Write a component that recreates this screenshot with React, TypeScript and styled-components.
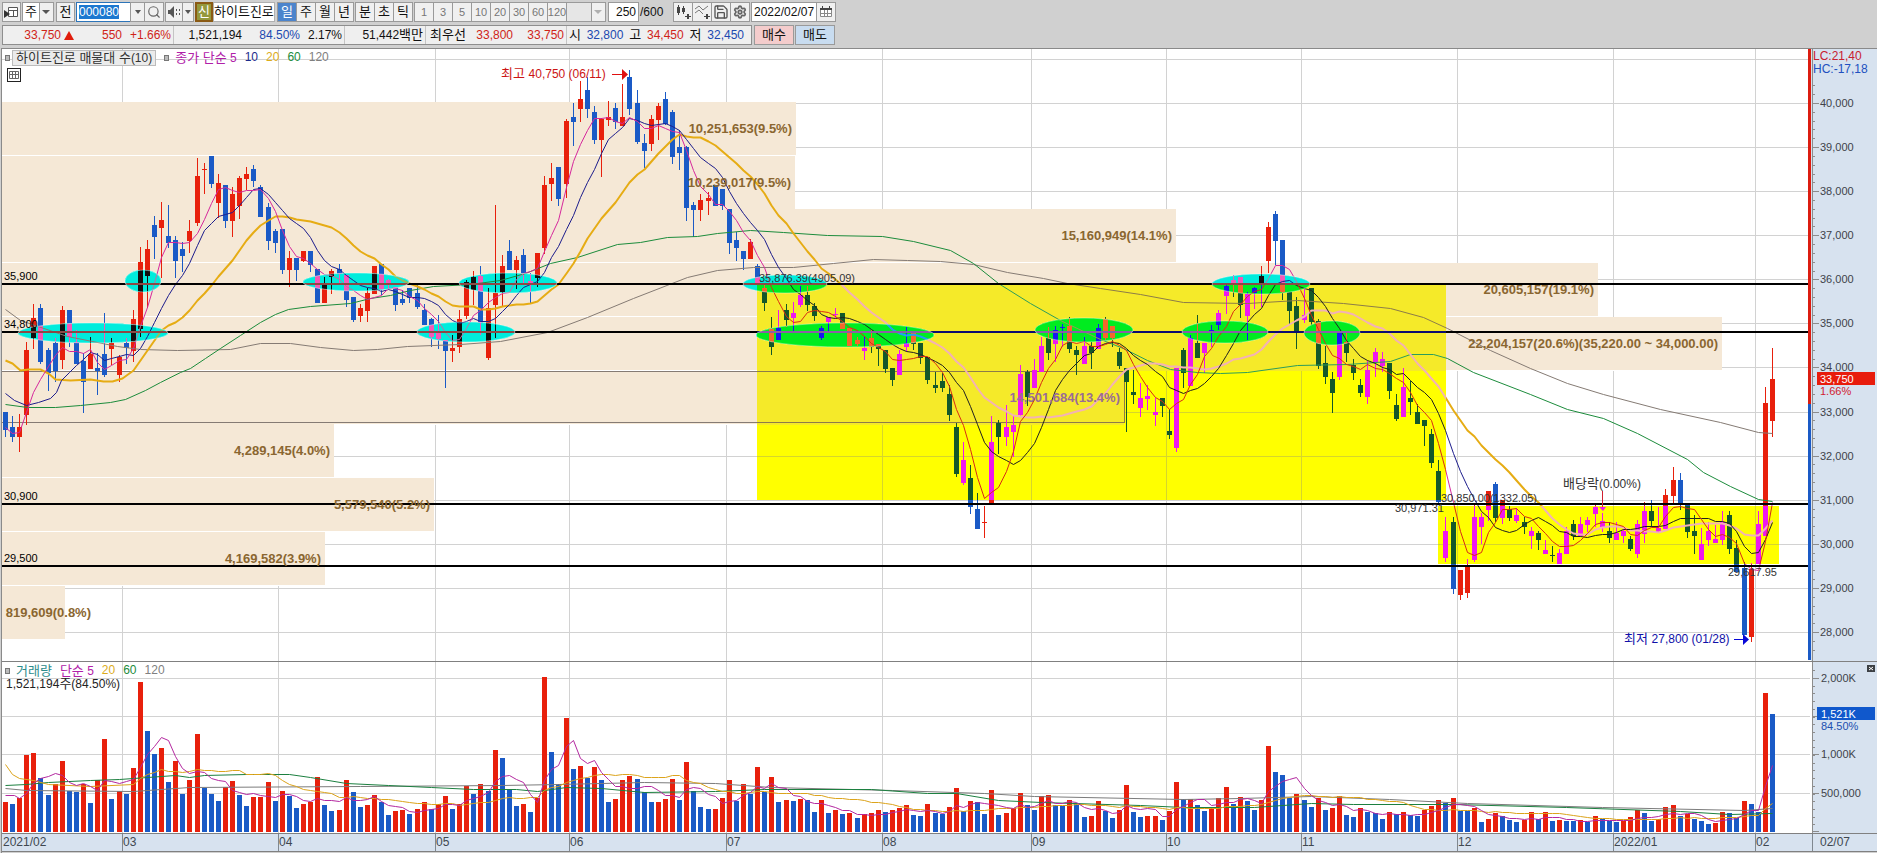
import React from "react";
import styled, { createGlobalStyle } from "styled-components";
import { Search, Settings, Save } from "lucide-react";

const FONT = '"Liberation Sans", "Noto Sans CJK KR", sans-serif';

const GlobalStyle = createGlobalStyle`
  * { box-sizing: border-box; }
  body { margin: 0; background: #d0d0d0; font-family: ${FONT}; font-size: 12px; color: #111; }
  button, input, select { font: inherit; color: inherit; border-radius: 0; margin: 0; }
`;

/* ---------- data ---------- */

type Candle = { x: number; hi: number; top: number; bot: number; lo: number; up: boolean };

const CANDLE_ROWS = `
412,412,430,437,b 416,427,437,442,b 414,427,437,452,r 342,350,415,425,r 304,318,338,349,r 304,308,362,364,b 348,350,373,391,b 338,343,371,382,b 306,310,360,369,r 310,310,337,347,b
330,342,364,364,b 353,361,382,413,b 337,354,369,369,r 353,368,371,395,b 313,354,375,377,b 338,343,349,365,r 355,357,375,382,r 338,343,348,364,b 310,319,351,362,r 247,262,329,337,r
240,249,276,308,r 216,225,237,259,b 202,220,228,278,r 205,236,243,248,b 236,240,261,278,b 242,249,256,272,b 220,231,241,253,r 158,176,223,226,r 163,169,170,194,r 156,156,184,188,b
174,183,203,218,r 185,185,221,228,b 187,194,221,237,r 176,178,206,219,r 167,174,179,190,r 165,169,181,187,b 185,187,217,217,b 203,207,241,250,b 229,231,243,253,b 229,229,270,274,b
251,258,270,287,r 258,258,270,281,b 251,251,261,262,r 251,251,265,272,b 269,269,303,303,b 277,283,303,303,r 269,271,277,294,r 264,269,274,283,b 275,275,300,307,b 297,297,320,322,b
304,308,316,322,r 288,293,311,322,r 266,266,294,294,r 264,264,289,295,b 279,280,285,290,b 287,287,305,311,b 290,299,303,305,b 288,288,298,303,b 283,293,307,309,b 304,310,325,325,b
318,319,337,347,b 315,331,339,349,b 340,340,351,388,b 335,348,351,362,r 310,319,347,353,r 280,282,316,319,r 271,277,290,305,r 266,276,323,335,b 288,308,358,360,r 205,293,305,338,r
255,266,292,307,r 240,251,270,270,b 256,260,270,289,r 249,255,274,283,b 273,281,283,303,b 253,253,278,287,r 176,185,248,254,r 163,178,184,201,r 167,167,199,206,b 119,121,184,198,r
103,117,122,146,b 81,99,109,122,r 77,90,109,118,b 106,112,140,144,b 118,119,140,177,r 101,117,120,126,r 103,108,122,129,b 84,117,126,126,r 70,77,109,115,b 90,103,142,144,b
134,143,151,168,b 115,119,144,151,r 103,106,120,140,r 92,99,124,125,b 110,112,157,164,b 130,147,153,170,b 146,147,208,221,b 202,205,210,237,b 194,200,210,221,r 192,198,201,215,r
185,185,206,206,b 189,189,206,210,b 209,209,243,254,b 232,240,248,261,b 251,251,259,270,b 239,242,259,259,r 264,266,283,283,b 283,288,303,311,b 317,329,347,355,b 310,328,340,340,r
304,310,320,327,b 302,313,318,332,r 286,295,305,307,r 286,295,305,311,b 303,306,316,321,b 326,328,338,340,r 317,317,322,332,r 308,314,315,318,r 313,313,329,329,b 328,328,346,346,b
337,340,344,346,b 336,348,351,360,r 330,338,347,353,b 344,344,349,366,b 350,350,369,373,b 368,368,380,386,b 350,354,375,375,r 327,343,347,352,r 331,331,344,350,b 343,343,358,364,b
357,357,380,384,b 372,385,388,393,b 373,381,388,392,b 385,394,415,421,b 423,427,474,477,b 442,460,483,485,r 465,478,507,514,b 493,509,529,529,b 506,522,523,538,r 416,442,504,504,r
420,423,437,454,b 405,427,437,446,r 416,425,432,457,r 365,374,415,417,r 370,372,397,406,b 359,370,388,388,r 337,346,372,372,r 327,338,353,360,b 326,330,344,362,r 324,327,328,347,r
317,326,349,353,b 346,350,355,375,b 337,346,364,364,r 342,346,353,369,b 324,328,349,349,r 317,319,338,340,b 326,326,338,347,b 348,352,366,369,b 368,368,382,432,b 370,392,395,404,b
383,398,408,417,r 385,396,399,410,r 398,412,415,426,r 398,398,406,417,b 409,431,435,439,b 368,368,448,452,r 348,350,373,388,b 335,338,386,386,r 315,343,358,358,b 343,343,353,373,r
325,330,331,347,r 310,313,325,330,r 283,286,296,314,r 275,280,284,297,b 277,277,305,318,b 292,294,316,340,r 287,288,293,309,r 266,276,283,307,r 222,227,261,273,r 211,214,241,265,b
240,240,292,300,b 292,292,311,325,b 297,306,333,349,b 288,315,320,323,r 288,288,322,325,b 319,321,366,369,b 346,363,377,384,b 372,379,393,413,b 333,333,377,380,r 332,342,353,362,b
359,365,373,380,b 379,385,393,397,b 361,370,397,404,r 348,352,362,377,r 352,359,366,372,r 363,363,391,399,b 394,405,419,421,b 368,387,417,417,r 381,398,402,415,b 404,412,424,424,b
420,420,426,446,b 429,434,463,468,b 460,471,502,505,b 517,531,558,562,r 517,522,589,594,b 570,570,595,600,r 559,567,593,598,r 505,517,560,562,r 513,517,527,544,r 491,491,510,521,r
482,484,518,522,b 500,500,518,524,r 506,509,518,521,b 508,515,521,523,r 517,522,527,534,b 527,531,536,549,r 531,533,540,550,b 540,550,554,554,r 546,555,556,562,b 549,553,564,564,r
527,531,554,554,r 520,524,536,540,b 517,524,536,537,r 517,520,525,532,r 505,507,514,527,r 513,521,527,532,r 522,531,538,543,b 522,533,540,540,r 529,531,536,543,r 536,539,549,551,b
520,524,554,558,r 502,511,534,543,r 500,511,521,527,b 507,528,532,532,r 489,495,529,529,r 467,480,496,503,r 473,480,504,510,b 505,505,532,538,b 515,531,536,554,b 528,544,560,560,r
522,531,540,546,r 525,539,543,543,r 511,522,540,545,r 511,515,549,554,b 540,548,572,572,b 562,568,635,635,b 563,569,637,642,r 511,524,564,564,r 387,403,536,536,r 348,379,421,437,r
`;

const xAt = (i: number) => 5 + Math.round(7.096 * i);

const candles: Candle[] = CANDLE_ROWS.trim()
  .split(/\s+/)
  .map((row, i) => {
    const [hi, top, bot, lo, dir] = row.split(",");
    return { x: xAt(i), hi: +hi, top: +top, bot: +bot, lo: +lo, up: dir === "r" };
  });

const volumes = `
89 83 102 230 236 161 110 143 212 124 119 143 86 155 278 98 122 113 191 449
302 233 251 149 212 113 155 293 132 113 92 135 152 110 77 104 105 149 92 122
107 71 83 89 164 80 62 65 155 119 74 80 110 89 50 62 65 53 68 89
68 85 107 68 83 137 113 143 122 245 221 125 77 83 59 101 464 239 143 341
188 197 161 194 155 89 98 155 167 158 119 89 90 98 158 95 209 122 74 68
69 101 155 92 143 113 194 119 164 89 95 92 98 97 59 95 56 65 53 56
41 53 56 65 59 65 71 80 50 47 83 56 53 74 132 62 92 89 53 125
50 56 71 116 80 65 107 110 80 77 95 83 44 47 92 62 41 65 140 59
44 47 48 35 62 149 98 99 80 62 71 101 134 83 104 92 65 95 257 179
170 101 113 95 74 101 65 71 107 50 44 71 59 56 38 59 53 59 50 47
65 77 95 86 101 63 62 71 29 38 56 47 35 29 35 59 38 59 32 35
34 32 35 30 47 38 32 31 32 44 65 56 32 38 74 80 47 53 38 32
23 26 59 56 41 92 83 59 416 353`
  .trim()
  .split(/\s+/)
  .map(Number);

type Point = [number, number];

/* Simple moving average; `lead` supplies the stretch before the first full window. */
const average = (values: number[], span: number, lead: Point[]): Point[] => {
  const out: Point[] = lead.slice();
  for (let i = span - 1; i < values.length; i++) {
    let sum = 0;
    for (let k = 0; k < span; k++) sum += values[i - k];
    out.push([xAt(i), Math.round(sum / span)]);
  }
  return out;
};

const closes = candles.map((c) => (c.up ? c.top : c.bot));
const ma5 = average(closes, 5, [[5, 427], [12, 433], [19, 432], [26, 412]]);
const ma10 = average(closes, 10, [[5, 393], [14, 400], [26, 405], [38, 402], [50, 398], [56, 392], [61, 380]]);
const ma20 = average(closes, 20, [[5, 360], [12, 363], [20, 370], [28, 369], [40, 369], [48, 373], [55, 379], [70, 380], [90, 379], [103, 381], [112, 381], [122, 378], [133, 370]]);
const ma60: Point[] = [
  [5, 404], [27, 407], [55, 407], [80, 405], [110, 402], [125, 399], [145, 390], [160, 382], [180, 372], [190, 368], [205, 358], [220, 348],
  [240, 335], [260, 322], [275, 314], [288, 309], [310, 306], [350, 303], [370, 298], [390, 295], [410, 290], [433, 286], [470, 284], [500, 280],
  [525, 273], [550, 263], [577, 257], [617, 244], [640, 242], [667, 237], [697, 236], [717, 233], [750, 230], [783, 232], [827, 235], [882, 236],
  [913, 241], [950, 250], [973, 263], [998, 283], [1030, 303], [1060, 320], [1100, 339], [1123, 348], [1147, 360], [1170, 369], [1197, 372],
  [1220, 373], [1247, 372], [1297, 365], [1347, 364], [1390, 361], [1410, 354], [1433, 354], [1447, 358], [1473, 372], [1530, 394], [1567, 409],
  [1603, 418], [1637, 433], [1687, 459], [1703, 472], [1730, 486], [1758, 499], [1772, 501],
];
const ma120: Point[] = [
  [5, 309], [20, 320], [67, 336], [117, 346], [140, 349], [177, 350], [230, 349], [260, 343], [290, 343], [320, 347], [353, 350], [377, 349],
  [407, 346], [460, 344], [500, 341], [547, 332], [587, 317], [633, 298], [687, 277], [717, 270], [753, 267], [793, 267], [833, 263], [873, 259],
  [907, 260], [940, 261], [973, 264], [1007, 272], [1043, 278], [1067, 283], [1100, 288], [1140, 294], [1183, 302], [1247, 303], [1297, 300],
  [1343, 303], [1390, 308], [1423, 317], [1447, 328], [1490, 350], [1530, 368], [1567, 383], [1603, 394], [1660, 409], [1720, 422], [1758, 432], [1772, 433],
];

const VOLUME_BASE = 832;
const volumeTops = volumes.map((v) => VOLUME_BASE - v / 3);
const vol5 = average(volumeTops, 5, [[5, 795], [14, 795], [19, 798], [26, 793]]);
const vol20 = average(volumeTops, 20, [[5, 764], [12, 774], [19, 778], [33, 780], [48, 784], [90, 786], [133, 784]]);
const byIndex = (pairs: Point[]): Point[] => pairs.map(([i, y]) => [xAt(i), y]);
const vol60 = byIndex([
  [0, 785], [3, 784], [6, 782], [12, 780], [16, 779], [18, 778], [20, 777], [24, 775], [26, 777], [28, 775], [34, 774], [40, 774], [43, 777], [48, 783],
  [54, 785], [60, 787], [66, 789], [72, 789], [75, 791], [79, 787], [84, 788], [90, 792], [100, 791], [107, 789], [122, 789], [130, 793], [134, 793],
  [140, 800], [146, 802], [160, 805], [166, 807], [176, 807], [184, 803], [190, 804], [204, 804], [220, 807], [236, 811], [243, 814], [249, 813],
]);
const vol120 = byIndex([
  [0, 788], [3, 790], [18, 791], [26, 787], [50, 786], [70, 785], [78, 784], [90, 782], [100, 783], [104, 785], [108, 787], [125, 790], [138, 793],
  [145, 796], [166, 799], [174, 798], [184, 796], [195, 799], [206, 803], [225, 807], [245, 810], [249, 808],
]);

const months = [
  { x: 122, label: "03" }, { x: 278, label: "04" }, { x: 435, label: "05" }, { x: 569, label: "06" }, { x: 726, label: "07" }, { x: 882, label: "08" },
  { x: 1031, label: "09" }, { x: 1166, label: "10" }, { x: 1301, label: "11" }, { x: 1457, label: "12" }, { x: 1613, label: "2022/01" }, { x: 1755, label: "02" },
];

const yOf = (price: number) => Math.round(103 + (40000 - price) * 0.04408);
const prices = Array.from({ length: 13 }, (_, i) => 40000 - i * 1000);

const profile = [
  { y: 102, right: 796, text: "10,251,653(9.5%)", end: 792 },
  { y: 156, right: 795, text: "10,239,017(9.5%)", end: 791 },
  { y: 209, right: 1176, text: "15,160,949(14.1%)", end: 1172 },
  { y: 263, right: 1598, text: "20,605,157(19.1%)", end: 1594 },
  { y: 317, right: 1722, text: "22,204,157(20.6%)(35,220.00 ~ 34,000.00)", end: 1718 },
  { y: 371, right: 1124, text: "14,501,684(13.4%)", end: 1120 },
  { y: 424, right: 334, text: "4,289,145(4.0%)", end: 330 },
  { y: 478, right: 434, text: "5,579,540(5.2%)", end: 430 },
  { y: 532, right: 325, text: "4,169,582(3.9%)", end: 321 },
  { y: 586, right: 65, text: "819,609(0.8%)", end: 91 },
];

const levels = [
  { y: 284, label: "35,900" },
  { y: 332, label: "34,800" },
  { y: 504, label: "30,900" },
  { y: 566, label: "29,500" },
];

const ellipses = [
  [143, 281, 18, 11], [93, 333, 75, 10], [356, 282, 53, 9], [466, 332, 49, 10], [508, 283, 49, 10], [785, 284, 42, 9],
  [845, 335, 89, 12], [1084, 330, 49, 12], [1225, 332, 43, 11], [1261, 284, 49, 10], [1332, 333, 28, 12],
];

/* ---------- chart pieces ---------- */

type Palette = {
  ground: string; bar: string; gap: string; grid: string; level: string; up: string; down: string; text: string;
  ma5: string; ma10: string; ma20: string; ma60: string; ma120: string;
};

const plain: Palette = {
  ground: "#ffffff", bar: "#f5e8d6", gap: "#ffffff", grid: "#d2d2d2", level: "#000000", up: "#e8200c", down: "#1a5ac6", text: "#8a6630",
  ma5: "#d6289c", ma10: "#1c1c8c", ma20: "#e6ac14", ma60: "#1c8c3c", ma120: "#857b74",
};
const onYellow: Palette = {
  ground: "#ffff00", bar: "#f5ea29", gap: "#f5ea29", grid: "#d6d62c", level: "#0c0c70", up: "#ee18ee", down: "#14582a", text: "#9a6c96",
  ma5: "#d82c14", ma10: "#202020", ma20: "#f3b2b4", ma60: "#2c9c5c", ma120: "#8c7c48",
};
const onCyan: Palette = {
  ...plain, ground: "#00ecdc", bar: "#00ecdc", gap: "#00ecdc", grid: "#00ecdc", level: "#8c4a46", up: "#101010", down: "#f458b8",
  ma5: "#c070a0", ma20: "#90c060",
};
const onGreen: Palette = {
  ...onYellow, ground: "#00ec20", bar: "#00ec20", gap: "#00ec20", grid: "#00ec20", level: "#8a60a4", up: "#1818f0", down: "#f4682c", ma20: "#20a0f0", ma60: "#90a050",
};

const ChartText = styled.text<{ $bold?: boolean; $wide?: boolean }>`
  font-family: ${FONT};
  font-size: ${(p) => (p.$bold ? 13 : p.$wide ? 12 : 11)}px;
  font-weight: ${(p) => (p.$bold ? 700 : 400)};
  white-space: pre;
`;

const HangulRun = styled.tspan`
  font-size: 13px;
`;

const Hangul = styled.span`
  font-size: 13px;
`;

const Curve = ({ points, color, width = 1 }: { points: Point[]; color: string; width?: number }) => (
  <polyline points={points.map((p) => p.join(",")).join(" ")} fill="none" stroke={color} strokeWidth={width} strokeLinejoin="round" transform="translate(.5 .5)" />
);

const Candles = ({ up, down }: { up: string; down: string }) => (
  <g shapeRendering="crispEdges">
    {candles.map((c, i) => (
      <g key={i} fill={c.up ? up : down}>
        <rect x={c.x} y={c.hi} width="1" height={Math.max(1, c.lo - c.hi)} />
        <rect x={c.x - 2} y={c.top} width="5" height={Math.max(1, c.bot - c.top)} />
      </g>
    ))}
  </g>
);

const PriceLayer = ({ p }: { p: Palette }) => (
  <g>
    <g shapeRendering="crispEdges">
      <rect x="2" y="49" width="1809" height="612" fill={p.ground} />
      {[59, ...prices.map(yOf)].map((y) => (
        <rect key={y} x="2" y={y} width="1806" height="1" fill={p.grid} />
      ))}
      {months.map((m) => (
        <rect key={m.x} x={m.x} y="49" width="1" height="612" fill={p.grid} />
      ))}
      {profile.map((b) => (
        <g key={b.y}>
          <rect x="2" y={b.y} width={b.right - 2} height="53" fill={p.bar} />
          <rect x="2" y={b.y + 53} width={b.right - 2} height="1" fill={p.gap} />
        </g>
      ))}
      <path d="M2 371.5H1124.5V422.5H2" fill="none" stroke={p.ma120} />
    </g>
    <Candles up={p.up} down={p.down} />
    <Curve points={ma120} color={p.ma120} />
    <Curve points={ma60} color={p.ma60} />
    <Curve points={ma20} color={p.ma20} width={2} />
    <Curve points={ma10} color={p.ma10} />
    <Curve points={ma5} color={p.ma5} />
    {levels.map((l) => (
      <rect key={l.y} x="2" y={l.y - 1} width="1809" height="2" fill={p.level} />
    ))}
  </g>
);

const Ticks = ({ from, to, step, origin }: { from: number; to: number; step: number; origin: number }) => {
  const marks: number[] = [];
  for (let y = origin; y <= to; y += step) marks.push(Math.round(y));
  for (let y = origin - step; y >= from; y -= step) marks.push(Math.round(y));
  return (
    <g fill="#8c8c8c">
      {marks.map((y) => (
        <rect key={y} x="1813" y={y} width="2" height="1" />
      ))}
    </g>
  );
};

const Svg = styled.svg`
  display: block;
  width: 100%;
  height: auto;
`;

const PricePane = () => (
  <Svg viewBox="1 48 1876 613" role="img" aria-label="하이트진로 일봉 차트">
    <defs>
      <clipPath id="marked">
        {ellipses.map(([cx, cy, rx, ry]) => (
          <ellipse key={cx} cx={cx} cy={cy} rx={rx} ry={ry} />
        ))}
      </clipPath>
      <clipPath id="boxes">
        <rect x="757" y="285" width="689" height="215" />
        <rect x="1438" y="506" width="341" height="58" />
      </clipPath>
    </defs>
    <PriceLayer p={plain} />
    <g clipPath="url(#marked)">
      <PriceLayer p={onCyan} />
    </g>
    <g clipPath="url(#boxes)">
      <PriceLayer p={onYellow} />
      <g clipPath="url(#marked)">
        <PriceLayer p={onGreen} />
      </g>
    </g>
    {ellipses.map(([cx, cy, rx, ry]) => (
      <ellipse key={cx} cx={cx} cy={cy} rx={rx} ry={ry} fill="none" stroke="#fff" strokeOpacity=".4" />
    ))}
    {profile.map((b) => (
      <ChartText key={b.y} $bold x={b.end} y={b.y + 31} textAnchor="end" fill={b.y === 371 ? onYellow.text : plain.text}>
        {b.text}
      </ChartText>
    ))}
    {levels.map((l) => (
      <ChartText key={l.y} x="4" y={l.y - 4} fill="#000">{l.label}</ChartText>
    ))}
    <ChartText x="759" y="282" fill="#333">35,876.39(4905.09)</ChartText>
    <ChartText x="1441" y="502" fill="#333">30,850.00(1332.05)</ChartText>
    <ChartText x="1395" y="512" fill="#333">30,971.31</ChartText>
    <ChartText x="1728" y="576" fill="#333">29,617.95</ChartText>
    <ChartText $wide x="1563" y="488" fill="#333"><HangulRun>배당락</HangulRun>(0.00%)</ChartText>
    <path d="M1602.5 491V508" stroke="#d02030" />
    <path d="M1599 507h7l-3 4z" fill="#ee18ee" />
    <ChartText $wide x="501" y="78" fill="#cc1414"><HangulRun>최고 </HangulRun>40,750 (06/11)</ChartText>
    <path d="M612 74h10v-5l6 5.500-6 5.500v-5h-10z" fill="#e01010" />
    <ChartText $wide x="1624" y="643" fill="#1010a8"><HangulRun>최저 </HangulRun>27,800 (01/28)</ChartText>
    <path d="M1734 639h9v-5l6 5.500-6 5.500v-5h-9z" fill="#0808d8" />

    <rect x="1808" y="49" width="3" height="355" fill="#dc1c10" />
    <rect x="1808" y="404" width="3" height="256" fill="#1a5ac6" />
    <rect x="1811" y="49" width="66" height="612" fill="#d7e2ef" />
    <rect x="1812" y="49" width="1" height="612" fill="#8c8c8c" />
    <Ticks from={80} to={655} step={8.816} origin={103} />
    {prices.map((v) => (
      <g key={v}>
        <rect x="1813" y={yOf(v)} width="6" height="1" fill="#8c8c8c" />
        <ChartText x="1820" y={yOf(v) + 4} fill="#40424a">{v.toLocaleString("en-US")}</ChartText>
      </g>
    ))}
    <ChartText $wide x="1813" y="60" fill="#c82030">LC:21,40</ChartText>
    <ChartText $wide x="1813" y="73" fill="#2050c0">HC:-17,18</ChartText>
    <rect x="1817" y="372" width="58" height="13" fill="#e81c0c" />
    <ChartText x="1820" y="383" fill="#fff">33,750</ChartText>
    <ChartText x="1820" y="395" fill="#d02030">1.66%</ChartText>
    <path d="M1 48.500H1877M1.500 48V661" stroke="#8a8a8a" fill="none" />
  </Svg>
);

const VolumePane = () => (
  <Svg viewBox="1 661 1876 192" role="img" aria-label="거래량 차트">
    <g shapeRendering="crispEdges">
      <rect x="2" y="661" width="1811" height="172" fill="#fff" />
      <rect x="1813" y="661" width="64" height="172" fill="#d7e2ef" />
      {[678, 716, 754, 793].map((y) => (
        <rect key={y} x="2" y={y} width="1808" height="1" fill="#d2d2d2" />
      ))}
      {months.map((m) => (
        <rect key={m.x} x={m.x} y="661" width="1" height="172" fill="#d2d2d2" />
      ))}
      {volumes.map((v, i) => {
        const h = Math.round(v / 3);
        const rising = i === 0 || v > volumes[i - 1];
        return <rect key={i} x={xAt(i) - 2} y={VOLUME_BASE - h} width="5" height={h} fill={rising ? "#e8200c" : "#1a5ac6"} />;
      })}
      <rect x="1812" y="661" width="1" height="172" fill="#8c8c8c" />
      <Ticks from={664} to={832} step={7.7} origin={678} />
      {[678, 716, 754, 793, 831].map((y) => (
        <rect key={y} x="1813" y={y} width="6" height="1" fill="#8c8c8c" />
      ))}
      <rect x="1" y="661" width="1876" height="1" fill="#808080" />
    </g>
    <Curve points={vol120} color="#7c7c7c" />
    <Curve points={vol60} color="#1c8040" />
    <Curve points={vol20} color="#dca41c" />
    <Curve points={vol5} color="#b428a0" />
    <ChartText x="1821" y="682" fill="#40424a">2,000K</ChartText>
    <ChartText x="1821" y="758" fill="#40424a">1,000K</ChartText>
    <ChartText x="1821" y="797" fill="#40424a">500,000</ChartText>
    <rect x="1817" y="707" width="58" height="13" fill="#1058cc" />
    <ChartText x="1821" y="718" fill="#fff">1,521K</ChartText>
    <ChartText x="1821" y="730" fill="#2050b0">84.50%</ChartText>
    <rect x="1867" y="665" width="8" height="7" fill="#3c4044" />
    <path d="M1869 667l4 3m0-3l-4 3" stroke="#fff" />

    <rect x="2" y="833" width="1875" height="18" fill="#d7e2ef" />
    <path d="M1 833.500H1877M1 851.500H1877" stroke="#808080" />
    <path d="M1.500 661V853" stroke="#8a8a8a" />
    <ChartText $wide x="3" y="846" fill="#404850">2021/02</ChartText>
    {[...months, { x: 1812, label: "" }].map((m) => (
      <g key={m.x}>
        <rect x={m.x} y="834" width="1" height="17" fill="#808890" />
        <ChartText $wide x={m.x + 1} y="846" fill="#404850">{m.label}</ChartText>
      </g>
    ))}
    <ChartText $wide x="1820" y="846" fill="#404850">02/07</ChartText>
  </Svg>
);

/* ---------- toolbar ---------- */

const Page = styled.main`
  min-width: 860px;
  overflow: hidden;
`;

const Toolbar = styled.div`
  display: flex;
  gap: 2px;
  height: 24px;
  padding: 2px;
`;

const Group = styled.div`
  display: flex;
  height: 20px;
`;

const Tool = styled.button<{ $w?: number; $tone?: string; $ink?: string; $num?: boolean }>`
  display: flex;
  flex: none;
  align-items: center;
  justify-content: center;
  width: ${(p) => p.$w ?? 20}px;
  height: 20px;
  padding: 0;
  margin-right: -1px;
  border: 1px solid #9a9a9a;
  background: ${(p) => p.$tone ?? "#f0f0f0"};
  color: ${(p) => p.$ink ?? "#111"};
  font-size: ${(p) => (p.$num ? 11 : 13)}px;
  line-height: 18px;
`;

const Field = styled.input<{ $w: number; $align?: string }>`
  flex: none;
  width: ${(p) => p.$w}px;
  height: 20px;
  padding: 0 2px;
  margin-right: -1px;
  border: 1px solid #9a9a9a;
  background: #fff;
  text-align: ${(p) => p.$align ?? "left"};
  outline: 0;
`;

const CodeField = styled(Field)`
  border: 1px solid #2c74b8;
  background: linear-gradient(#1c78d0, #1c78d0) 2px 2px / 40px 14px no-repeat #fff;
  color: #fff;
`;

const PickerBox = styled.div<{ $w: number; $off?: boolean }>`
  position: relative;
  flex: none;
  width: ${(p) => p.$w}px;
  height: 20px;
  border: 1px solid #9a9a9a;
  background: linear-gradient(90deg, ${(p) => (p.$off ? "#e6e6e6" : "#fff")} calc(100% - 14px), #9a9a9a 0, #9a9a9a calc(100% - 13px), #f0f0f0 0);
  color: ${(p) => (p.$off ? "#b0b0b0" : "#555")};
`;

const Select = styled.select`
  display: block;
  appearance: none;
  width: 100%;
  height: 18px;
  padding: 0 2px;
  border: 0;
  background: none;
  color: #111;
  font-size: 13px;
  line-height: 18px;
`;

const Arrow = styled.i`
  position: absolute;
  right: 3px;
  top: 7px;
  border: 4px solid transparent;
  border-top-color: currentColor;
  border-bottom: 0;
  pointer-events: none;
`;

const SmallArrow = styled.i`
  border: 3px solid transparent;
  border-top: 4px solid #555;
  border-bottom: 0;
`;

const Badge = styled.span`
  width: 18px;
  height: 20px;
  border: 2px solid #8a5a14;
  background: #94983c;
  color: #fff;
  font-size: 13px;
  line-height: 15px;
  text-align: center;
`;

const StockName = styled.strong`
  width: 62px;
  height: 20px;
  border: 1px solid #b0b0b0;
  background: #fff;
  font-size: 13px;
  font-weight: 400;
  line-height: 18px;
  white-space: nowrap;
`;

const Total = styled.span`
  width: 31px;
  line-height: 20px;
`;

const QuoteBar = styled.div`
  display: flex;
  gap: 2px;
  height: 24px;
  padding: 1px 2px 3px;
`;

const Quotes = styled.dl`
  display: flex;
  flex: none;
  margin: 0;
  height: 20px;
  border: 1px solid #8e8e8e;
  background: #efefef;
`;

const Cell = styled.div<{ $w: number }>`
  display: flex;
  align-items: center;
  justify-content: flex-end;
  width: ${(p) => p.$w}px;
  padding-right: 2px;
  border-right: 1px solid #c4c4c4;
  line-height: 18px;
  white-space: nowrap;
  &:last-child { border-right: 0; padding-right: 7px; }
`;

const Value = styled.dd<{ $tone?: string; $w?: number }>`
  width: ${(p) => (p.$w ? `${p.$w}px` : "auto")};
  margin: 0;
  color: ${(p) => p.$tone ?? "#111"};
  text-align: right;
`;

const Term = styled.dt<{ $w: number }>`
  width: ${(p) => p.$w}px;
  font-size: 13px;
  text-align: right;
`;

const Rise = styled.i`
  margin-left: 3px;
  border: 5px solid transparent;
  border-bottom: 9px solid #e01c0c;
  border-top: 0;
`;

/* ---------- legends over the chart ---------- */

const Chart = styled.section`
  position: relative;
  margin: 0 0 0 1px;
`;

const Legend = styled.div`
  position: absolute;
  left: 4px;
  top: 2px;
  display: flex;
  align-items: center;
  gap: 8px;
  height: 15px;
  line-height: 15px;
  white-space: nowrap;
`;

const Dot = styled.i`
  width: 5px;
  height: 6px;
  border: 1px solid #777;
  background: #bbb;
  margin-right: -2px;
`;

const Title = styled.span`
  margin-left: -4px;
  padding: 0 3px;
  border: 1px solid #bcbcbc;
  background: #ebebeb;
  color: #333;
  line-height: 13px;
`;

const Tint = styled.span<{ $c: string }>`
  color: ${(p) => p.$c};
`;

const GridButton = styled.button`
  position: absolute;
  left: 6px;
  top: 20px;
  width: 14px;
  height: 14px;
  padding: 0;
  border: 1px solid #222;
  background: #fff;
  display: flex;
`;

const VolumeNote = styled.div`
  position: absolute;
  left: 5px;
  top: 15px;
  line-height: 16px;
  color: #222;
`;

const RED = "#d02418";
const BLUE = "#2048b0";

export default function App() {
  return (
    <Page>
      <GlobalStyle />
      <Toolbar>
        <Tool $w={19} aria-label="패널 열기">
          <svg width="15" height="14" viewBox="0 0 15 14">
            <path d="M4.500 2.500h9v9h-9zM4.500 5.500h9M9.500 5v6" fill="#fff" stroke="#555" />
            <path d="M0 5l6 4-6 4z" fill="#333" />
          </svg>
        </Tool>
        <PickerBox $w={32}>
          <Select aria-label="주기"><option>주</option></Select>
          <Arrow />
        </PickerBox>
        <Tool $w={19}>전</Tool>
        <Group>
          <CodeField $w={55} defaultValue="000080" aria-label="종목코드" />
          <Tool $w={15} aria-label="종목 목록"><SmallArrow /></Tool>
          <Tool aria-label="검색"><Search size={14} color="#666" /></Tool>
        </Group>
        <Group>
          <Tool $w={18} aria-label="소리">
            <svg width="14" height="12" viewBox="0 0 14 12" fill="#555">
              <path d="M1 4h2l4-4v12L3 8H1z" />
              <path d="M9 3h1v2H9zM9 7h1v2H9zM12 3h1v2h-1zM12 7h1v2h-1z" />
            </svg>
          </Tool>
          <Tool $w={12} aria-label="소리 설정"><SmallArrow /></Tool>
        </Group>
        <Group>
          <Badge>신</Badge>
          <StockName>하이트진로</StockName>
        </Group>
        <Group>
          <Tool $tone="#4c84cc" $ink="#fff">일</Tool>
          <Tool>주</Tool>
          <Tool>월</Tool>
          <Tool>년</Tool>
        </Group>
        <Group>
          <Tool>분</Tool>
          <Tool>초</Tool>
          <Tool>틱</Tool>
        </Group>
        <Group>
          {["1", "3", "5", "10", "20", "30", "60", "120"].map((n) => (
            <Tool key={n} $num $ink="#777">{n}</Tool>
          ))}
          <PickerBox $w={40} $off>
            <Select aria-label="간격" disabled><option> </option></Select>
            <Arrow />
          </PickerBox>
        </Group>
        <Field $w={31} $align="right" defaultValue="250" aria-label="봉 개수" />
        <Total>/600</Total>
        <Group>
          <Tool aria-label="캔들 추가">
            <svg width="16" height="16" viewBox="0 0 16 16" fill="#444">
              <path d="M2 3h3v6H2zM3 1h1v10H3zM7 4h3v4H7zM8 2h1v8H8z" />
              <path d="M12 10h2v2h2v1h-2v2h-2v-2h-2v-1h2z" />
            </svg>
          </Tool>
          <Tool aria-label="지표 추가">
            <svg width="16" height="16" viewBox="0 0 16 16" fill="#444">
              <path d="M1 5l4-3 4 4 5-4M1 9l4-3 4 4" fill="none" stroke="#777" />
              <path d="M12 10h2v2h2v1h-2v2h-2v-2h-2v-1h2z" />
            </svg>
          </Tool>
          <Tool aria-label="저장"><Save size={16} color="#555" /></Tool>
          <Tool aria-label="설정"><Settings size={14} color="#666" strokeWidth={3} /></Tool>
        </Group>
        <Group>
          <Field $w={66} defaultValue="2022/02/07" aria-label="날짜" />
          <Tool aria-label="달력">
            <svg width="12" height="12" viewBox="0 0 12 12">
              <path d="M.5 2.500h11v8H.5zM.5 7.500h11M4.500 4v6M7.500 4v6" fill="#fff" stroke="#888" />
              <path d="M0 2h12v2H0zM2 0h1v2H2zM9 0h1v2H9z" fill="#444" />
            </svg>
          </Tool>
        </Group>
      </Toolbar>

      <QuoteBar>
        <Quotes>
          <Cell $w={171}>
            <Value $tone={RED}>33,750</Value>
            <Rise />
            <Value $tone={RED} $w={48}>550</Value>
            <Value $tone={RED} $w={49}>+1.66%</Value>
          </Cell>
          <Cell $w={171}>
            <Value>1,521,194</Value>
            <Value $tone={BLUE} $w={58}>84.50%</Value>
            <Value $w={42}>2.17%</Value>
          </Cell>
          <Cell $w={81}>
            <Value>51,442<Hangul>백만</Hangul></Value>
          </Cell>
          <Cell $w={141}>
            <Term $w={38}>최우선</Term>
            <Value $tone={RED} $w={47}>33,800</Value>
            <Value $tone={RED} $w={51}>33,750</Value>
          </Cell>
          <Cell $w={184}>
            <Term $w={14}>시</Term>
            <Value $tone={BLUE} $w={43}>32,800</Value>
            <Term $w={18}>고</Term>
            <Value $tone={RED} $w={43}>34,450</Value>
            <Term $w={18}>저</Term>
            <Value $tone={BLUE} $w={43}>32,450</Value>
          </Cell>
        </Quotes>
        <Tool $w={40} $tone="#f4cccc">매수</Tool>
        <Tool $w={40} $tone="#c8dcf0">매도</Tool>
      </QuoteBar>

      <Chart>
        <PricePane />
        <Legend>
          <Dot />
          <Title><Hangul>하이트진로 매물대 수</Hangul>(10)</Title>
          <Dot />
          <Tint $c="#b020a8"><Hangul>종가 단순</Hangul> 5</Tint>
          <Tint $c="#1c2c8c">10</Tint>
          <Tint $c="#dcac1c">20</Tint>
          <Tint $c="#1c8c3c">60</Tint>
          <Tint $c="#808080">120</Tint>
        </Legend>
        <GridButton aria-label="표 보기">
          <svg width="12" height="12" viewBox="0 0 12 12">
            <path d="M1.500 2.500h9v7h-9zM1 5.500h10M4.500 2v8M7.500 2v8" fill="none" stroke="#666" />
          </svg>
        </GridButton>
      </Chart>
      <Chart>
        <VolumePane />
        <Legend>
          <Dot />
          <Tint $c="#2c8c8c"><Hangul>거래량</Hangul></Tint>
          <Tint $c="#b020a8"><Hangul>단순</Hangul> 5</Tint>
          <Tint $c="#dcac1c">20</Tint>
          <Tint $c="#1c8c3c">60</Tint>
          <Tint $c="#808080">120</Tint>
        </Legend>
        <VolumeNote>1,521,194<Hangul>주</Hangul>(84.50%)</VolumeNote>
      </Chart>
    </Page>
  );
}
